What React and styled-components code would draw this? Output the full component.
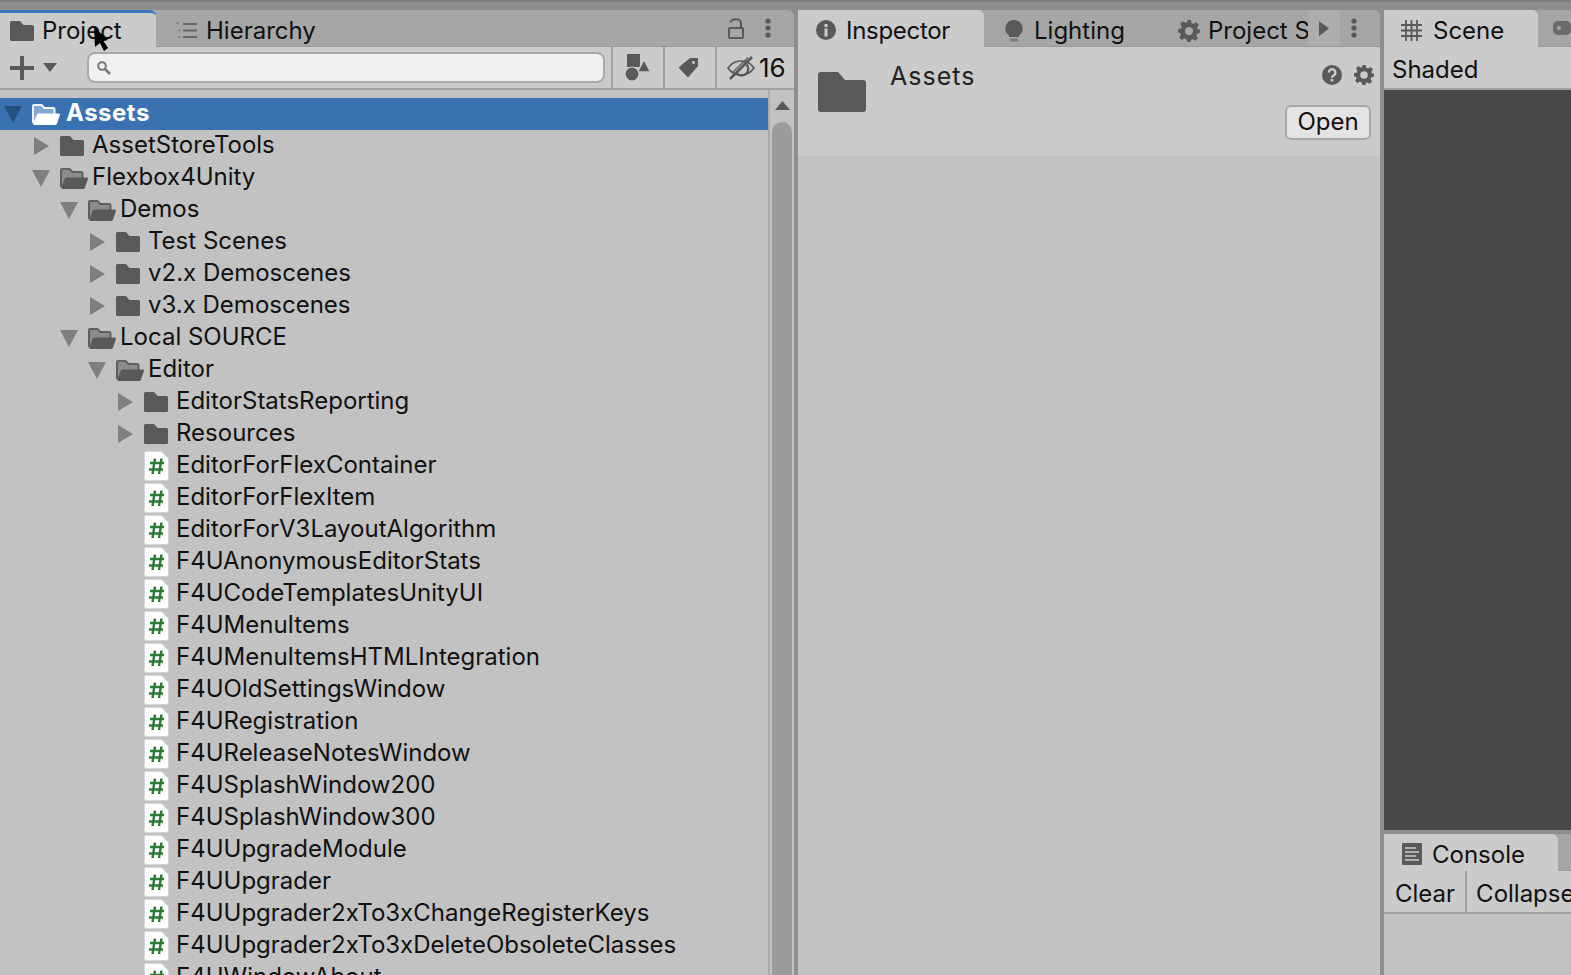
import styled, { createGlobalStyle } from "styled-components";

const GlobalStyle = createGlobalStyle`
html, body { margin: 0; padding: 0; height: 100%; overflow: hidden; background: #8e8e8e; }
* { box-sizing: border-box; }
`;

const Page = styled.div`
  position: relative;
  width: 1571px;
  height: 975px;
  overflow: hidden;
  display: flex;
  gap: 4px;
  padding-top: 10px;
  background: #8e8e8e;
  font-family: Inter, "Noto Sans", sans-serif;
  font-size: 24px;
  color: #111;
  &::before {
    content: "";
    position: absolute;
    left: 0;
    right: 0;
    top: 0;
    height: 2px;
    background: #7b7b7b;
  }
`;

const Panel = styled.div`
  width: ${(p) => p.$width}px;
  flex: none;
  display: flex;
  flex-direction: column;
  overflow: hidden;
`;

const TabBar = styled.div`
  height: 37px;
  flex: none;
  display: flex;
  align-items: stretch;
  background: #a6a6a6;
  border-radius: 6px 6px 0 0;
  border-bottom: 1px solid #9a9a9a;
`;

const Tab = styled.div`
  width: ${(p) => p.$width}px;
  flex: none;
  display: flex;
  align-items: center;
  gap: ${(p) => p.$gap || 10}px;
  padding-left: ${(p) => p.$pad}px;
  padding-top: ${(p) => (p.$focus ? 1 : p.$active ? 3 : 5)}px;
  overflow: hidden;
  white-space: nowrap;
  letter-spacing: ${(p) => p.$spacing || 0}px;
  background: ${(p) => (p.$active ? "#cbcbcb" : "transparent")};
  border-top: ${(p) => (p.$focus ? "3px solid #3d78c2" : "none")};
  border-radius: 0 6px 0 0;
  margin-bottom: ${(p) => (p.$active ? "-1px" : "0")};
  svg { flex: none; }
`;

const TabActions = styled.div`
  margin-left: auto;
  display: flex;
  align-items: center;
  gap: ${(p) => p.$gap || 0}px;
  padding-right: ${(p) => p.$pad || 0}px;
`;

const OverflowArrow = styled.div`
  width: 32px;
  flex: none;
  display: flex;
  align-items: center;
  justify-content: center;
  background: #adadad;
`;

const MenuBox = styled.div`
  width: 40px;
  flex: none;
  display: flex;
  align-items: center;
  padding-left: 11px;
`;

const Toolbar = styled.div`
  height: 43px;
  flex: none;
  display: flex;
  align-items: center;
  background: #cbcbcb;
  border-bottom: 2px solid #a0a0a0;
`;

const ToolbarPlus = styled.div`
  width: 87px;
  flex: none;
  display: flex;
  align-items: center;
  gap: 9px;
  padding-left: 10px;
`;

const SearchBox = styled.div`
  width: 518px;
  height: 31px;
  flex: none;
  display: flex;
  align-items: center;
  padding-left: 8px;
  background: #f0f0f0;
  border: 2px solid #a9a9a9;
  border-radius: 8px;
`;

const FilterButton = styled.div`
  width: ${(p) => p.$width}px;
  height: 41px;
  flex: none;
  display: flex;
  align-items: center;
  justify-content: ${(p) => (p.$start ? "flex-start" : "center")};
  gap: 4px;
  padding-left: ${(p) => (p.$start ? "10px" : "0")};
  padding-right: ${(p) => p.$nudge || 0}px;
  margin-left: ${(p) => p.$left || 0}px;
  border-left: 2px solid #a0a0a0;
`;

const CountLabel = styled.span`
  font-size: 26px;
`;

const TreeArea = styled.div`
  flex: 1;
  display: flex;
  min-height: 0;
  background: #c2c2c2;
`;

const Tree = styled.div`
  width: 768px;
  flex: none;
  padding-top: 8px;
  overflow: hidden;
`;

const Row = styled.div`
  height: 32px;
  display: flex;
  align-items: center;
  padding-left: ${(p) => 4 + p.$depth * 28}px;
  white-space: nowrap;
  background: ${(p) => (p.$selected ? "#3a72b1" : "transparent")};
  color: ${(p) => (p.$selected ? "#fff" : "#111")};
  font-weight: ${(p) => (p.$selected ? 700 : 400)};
  letter-spacing: ${(p) => (p.$selected ? "0.5px" : "0")};
`;

const RowLabel = styled.span`
  padding-bottom: 4px;
`;

const ArrowSlot = styled.div`
  width: 28px;
  height: 32px;
  flex: none;
  display: flex;
  align-items: center;
`;

const IconSlot = styled.div`
  width: ${(p) => (p.$wide ? 34 : 32)}px;
  height: 32px;
  flex: none;
  display: flex;
  align-items: center;
`;

const Scrollbar = styled.div`
  width: 26px;
  flex: none;
  display: flex;
  flex-direction: column;
  align-items: center;
  padding: 11px 0 0 0;
  border-left: 2px solid #a9a9a9;
`;

const ScrollThumb = styled.div`
  width: 20px;
  flex: 1;
  margin-top: 12px;
  background: #9b9b9b;
  border-radius: 10px 10px 0 0;
`;

const InspectorHeader = styled.div`
  height: 109px;
  flex: none;
  display: flex;
  background: #cbcbcb;
  padding: 25px 9px 0 20px;
`;

const InspectorTitle = styled.div`
  flex: 1;
  margin-left: 24px;
  margin-top: -12px;
  line-height: 32px;
  font-size: 25px;
  letter-spacing: 1px;
  color: #222;
`;

const InspectorSide = styled.div`
  display: flex;
  flex-direction: column;
  align-items: flex-end;
  margin-top: -7px;
  gap: 20px;
`;

const HeaderIcons = styled.div`
  display: flex;
  align-items: center;
  gap: 12px;
  margin-right: -3px;
`;

const OpenButton = styled.div`
  width: 86px;
  height: 35px;
  display: flex;
  align-items: center;
  justify-content: center;
  padding-bottom: 2px;
  background: #e4e4e4;
  border: 2px solid #a9a9a9;
  border-radius: 6px;
`;

const Fill = styled.div`
  flex: 1;
  background: #c2c2c2;
`;

const SceneView = styled.div`
  height: 744px;
  flex: none;
  background: #484848;
  border-bottom: 4px solid #8e8e8e;
`;

const SceneTabBar = styled(TabBar)`
  border-radius: 0;
`;

const PlainLabel = styled.div`
  padding: 3px 0 0 ${(p) => p.$pad}px;
  white-space: nowrap;
`;

const ConsoleButton = styled.div`
  height: 41px;
  flex: none;
  display: flex;
  align-items: center;
  white-space: nowrap;
  padding: 3px ${(p) => p.$right}px 0 ${(p) => p.$left}px;
  border-right: ${(p) => (p.$divider ? "2px solid #a0a0a0" : "none")};
`;

const Cursor = styled.svg`
  position: absolute;
  left: 94px;
  top: 27px;
`;

const ink = "#595959";

const FolderClosed = ({ w = 24, h = 20 }) => (
  <svg width={w} height={h} viewBox="0 0 24 20">
    <path d="M1.500 0H10l3.500 4H22.500a1.500 1.500 0 0 1 1.500 1.500V18.500A1.500 1.500 0 0 1 22.500 20H1.500A1.500 1.500 0 0 1 0 18.500V1.500A1.500 1.500 0 0 1 1.500 0Z" fill={ink} />
  </svg>
);

const FolderOpen = ({ light }) => (
  <svg width="28" height="21" viewBox="0 0 28 21">
    <path
      d="M2 1H9.500l3 3H21a1.500 1.500 0 0 1 1.500 1.500V12H6L2.500 19A1.500 1.500 0 0 1 1 17.500V2A1 1 0 0 1 2 1Z"
      fill={light ? "#7fa8d6" : "#8c8c8c"}
      stroke={light ? "#f2f6fb" : "#606060"}
      strokeWidth="2"
    />
    <path d="M6.500 9.500H26.500a1.400 1.400 0 0 1 1.300 1.900L25 19.500A2 2 0 0 1 23 21H2.500a1 1 0 0 1-1-1.300L4.600 11A2 2 0 0 1 6.500 9.500Z" fill={light ? "#fff" : ink} />
  </svg>
);

const ArrowRight = () => (
  <svg width="20" height="18" viewBox="0 0 20 18"><path d="M2 0L17 9L2 18Z" fill="#7f7f7f" /></svg>
);

const ArrowDown = ({ color = "#7f7f7f" }) => (
  <svg width="20" height="18" viewBox="0 0 20 18"><path d="M0 1H18L9 18Z" fill={color} /></svg>
);

const ScriptIcon = () => (
  <svg width="25" height="30" viewBox="0 0 25 30">
    <path d="M2.500.5H17.500L24.500 7.500V27.500A2 2 0 0 1 22.500 29.500H2.500A2 2 0 0 1 .5 27.500V2.500A2 2 0 0 1 2.500.5Z" fill="#fff" stroke="#d6d6d6" />
    <path d="M11 7.500L8.500 23M17.500 7.500L15 23M6 12H20M5 18.500H19" stroke="#2a7b30" strokeWidth="2.400" fill="none" />
  </svg>
);

const Dots = () => (
  <svg width="6" height="20" viewBox="0 0 6 20" fill={ink}>
    <circle cx="3" cy="3" r="2.600" /><circle cx="3" cy="10" r="2.600" /><circle cx="3" cy="17" r="2.600" />
  </svg>
);

const Gear = ({ size = 22 }) => (
  <svg width={size} height={size} viewBox="0 0 24 24">
    <path fillRule="evenodd" fill={ink} d="M10 0h4l.7 3.300 2.300 1 2.900-1.800 2.800 2.800-1.800 2.900 1 2.300L24 10v4l-3.100.7-1 2.300 1.800 2.900-2.800 2.800-2.900-1.800-2.300 1L14 24h-4l-.7-3.100-2.300-1-2.900 1.800-2.800-2.800 1.800-2.900-1-2.300L0 14v-4l3.100-.7 1-2.300-1.800-2.900 2.800-2.800 2.900 1.800 2.300-1ZM12 7.500a4.500 4.500 0 1 0 0 9 4.500 4.500 0 0 0 0-9Z" />
  </svg>
);

const Lock = () => (
  <svg width="16" height="21" viewBox="0 0 16 21" fill="none" stroke={ink} strokeWidth="2">
    <rect x="1" y="10" width="14" height="10" rx="1" />
    <path d="M2.500 4.500C4 0 13 0 13 5.500V10" />
  </svg>
);

const ListIcon = () => (
  <svg width="21" height="17" viewBox="0 0 21 17" stroke="#666" strokeWidth="2" fill="none">
    <path d="M7 2H21M7 8.500H21M7 15H21" />
    <path d="M0 1H3M2 8.500H5M2 15H5" stroke="#888" />
  </svg>
);

const InfoIcon = () => (
  <svg width="20" height="20" viewBox="0 0 20 20">
    <circle cx="10" cy="10" r="10" fill={ink} />
    <rect x="8.500" y="4" width="3" height="3" fill="#cbcbcb" />
    <rect x="8.500" y="8.500" width="3" height="8" fill="#cbcbcb" />
  </svg>
);

const Bulb = () => (
  <svg width="18" height="22" viewBox="0 0 18 22" fill={ink}>
    <path d="M9 0a8.500 8.500 0 0 1 5 15.400V17H4v-1.600A8.500 8.500 0 0 1 9 0Z" />
    <rect x="5" y="18.500" width="8" height="3" rx="1" fill="#7a7a7a" />
  </svg>
);

const GridIcon = () => (
  <svg width="21" height="21" viewBox="0 0 21 21" stroke={ink} strokeWidth="1.800" fill="none">
    <path d="M5 0V21M10.500 0V21M16 0V21M0 5H21M0 10.500H21M0 16H21" />
  </svg>
);

const QuestionIcon = () => (
  <svg width="20" height="20" viewBox="0 0 20 20">
    <circle cx="10" cy="10" r="10" fill={ink} />
    <path d="M6.800 7.500a3.300 3.300 0 1 1 5 2.800c-1.200.8-1.800 1.200-1.800 2.400" stroke="#cbcbcb" strokeWidth="2.400" fill="none" />
    <rect x="8.700" y="14" width="2.600" height="2.600" fill="#cbcbcb" />
  </svg>
);

const ConsoleIcon = () => (
  <svg width="20" height="22" viewBox="0 0 20 22">
    <rect width="20" height="22" rx="1" fill={ink} />
    <path d="M3 5H14M3 9H17M3 13H14M3 17H17" stroke="#cbcbcb" strokeWidth="1.700" />
  </svg>
);

const SearchIcon = () => (
  <svg width="14" height="14" viewBox="0 0 14 14" fill="none" stroke="#777" strokeWidth="2">
    <circle cx="5" cy="5" r="3.800" /><path d="M8 8L13 13" strokeWidth="2.500" />
  </svg>
);

const ShapesIcon = () => (
  <svg width="25" height="27" viewBox="0 0 25 27" fill={ink}>
    <rect x="2" y="0" width="13" height="13" />
    <path d="M19 5.500L25.500 18H12.500Z" stroke="#cbcbcb" strokeWidth="1.500" />
    <circle cx="7" cy="20" r="7" stroke="#cbcbcb" strokeWidth="1.200" />
  </svg>
);

const TagIcon = () => (
  <svg width="21" height="21" viewBox="0 0 21 21">
    <path fillRule="evenodd" fill={ink} d="M12 1H20V9L10 20.500L0.500 10.500ZM15.500 4a1.500 1.500 0 1 0 0 3 1.500 1.500 0 0 0 0-3Z" />
  </svg>
);

const EyeOff = () => (
  <svg width="28" height="24" viewBox="0 0 28 24" fill="none" stroke={ink} strokeWidth="1.600">
    <path d="M1 12C5 6 10 5 14 5s9 1 13 7c-4 6-9 7-13 7S5 18 1 12Z" />
    <path d="M10 17.500A6.500 6.500 0 0 0 19.500 8.500" strokeWidth="2.400" />
    <path d="M25 1L3 23" strokeWidth="2.600" />
    <path d="M21 1.500L6 16" strokeWidth="1.200" />
  </svg>
);

const PuzzleIcon = () => (
  <svg width="18" height="14" viewBox="0 0 18 14">
    <rect width="18" height="14" rx="5" fill="#6b6b6b" />
    <circle cx="6" cy="7" r="2" fill="#a6a6a6" />
  </svg>
);

const treeRows = [
  { name: "Assets", depth: 0, kind: "open", selected: true },
  { name: "AssetStoreTools", depth: 1, kind: "closed" },
  { name: "Flexbox4Unity", depth: 1, kind: "open" },
  { name: "Demos", depth: 2, kind: "open" },
  { name: "Test Scenes", depth: 3, kind: "closed" },
  { name: "v2.x Demoscenes", depth: 3, kind: "closed" },
  { name: "v3.x Demoscenes", depth: 3, kind: "closed" },
  { name: "Local SOURCE", depth: 2, kind: "open" },
  { name: "Editor", depth: 3, kind: "open" },
  { name: "EditorStatsReporting", depth: 4, kind: "closed" },
  { name: "Resources", depth: 4, kind: "closed" },
  ...[
    "EditorForFlexContainer",
    "EditorForFlexItem",
    "EditorForV3LayoutAlgorithm",
    "F4UAnonymousEditorStats",
    "F4UCodeTemplatesUnityUI",
    "F4UMenuItems",
    "F4UMenuItemsHTMLIntegration",
    "F4UOldSettingsWindow",
    "F4URegistration",
    "F4UReleaseNotesWindow",
    "F4USplashWindow200",
    "F4USplashWindow300",
    "F4UUpgradeModule",
    "F4UUpgrader",
    "F4UUpgrader2xTo3xChangeRegisterKeys",
    "F4UUpgrader2xTo3xDeleteObsoleteClasses",
    "F4UWindowAbout",
  ].map((name) => ({ name, depth: 4, kind: "script" })),
];

const TreeRow = ({ name, depth, kind, selected }) => (
  <Row $depth={depth} $selected={selected}>
    <ArrowSlot>
      {kind === "open" && <ArrowDown color={selected ? "#24507f" : "#7f7f7f"} />}
      {kind === "closed" && <ArrowRight />}
    </ArrowSlot>
    <IconSlot $wide={selected}>
      {kind === "open" && <FolderOpen light={selected} />}
      {kind === "closed" && <FolderClosed />}
      {kind === "script" && <ScriptIcon />}
    </IconSlot>
    <RowLabel>{name}</RowLabel>
  </Row>
);

export default function App() {
  return (
    <Page>
      <GlobalStyle />
      <Panel $width={794}>
        <TabBar>
          <Tab $width={156} $active $focus $pad={10} $gap={8}>
            <FolderClosed />
            Project
          </Tab>
          <Tab $width={180} $pad={20} $gap={9}>
            <ListIcon />
            Hierarchy
          </Tab>
          <TabActions $gap={21} $pad={23}>
            <Lock />
            <Dots />
          </TabActions>
        </TabBar>
        <Toolbar>
          <ToolbarPlus>
            <svg width="24" height="24" viewBox="0 0 24 24" fill={ink}>
              <path d="M10 0h4v10h10v4H14v10h-4V14H0v-4h10Z" />
            </svg>
            <svg width="14" height="9" viewBox="0 0 14 9" fill={ink}>
              <path d="M0 0H14L7 9Z" />
            </svg>
          </ToolbarPlus>
          <SearchBox>
            <SearchIcon />
          </SearchBox>
          <FilterButton $width={52} $left={6} $nudge={2}>
            <ShapesIcon />
          </FilterButton>
          <FilterButton $width={52} $nudge={4}>
            <TagIcon />
          </FilterButton>
          <FilterButton $width={79} $start>
            <EyeOff />
            <CountLabel>16</CountLabel>
          </FilterButton>
        </Toolbar>
        <TreeArea>
          <Tree>
            {treeRows.map((row) => (
              <TreeRow key={row.name} {...row} />
            ))}
          </Tree>
          <Scrollbar>
            <svg width="15" height="9" viewBox="0 0 15 9" fill={ink}>
              <path d="M7.500 0L15 9H0Z" />
            </svg>
            <ScrollThumb />
          </Scrollbar>
        </TreeArea>
      </Panel>

      <Panel $width={582}>
        <TabBar>
          <Tab $width={186} $active $pad={18} $spacing={-0.3}>
            <InfoIcon />
            Inspector
          </Tab>
          <Tab $width={172} $pad={21} $gap={11}>
            <Bulb />
            Lighting
          </Tab>
          <Tab $width={152} $pad={22} $gap={8}>
            <Gear />
            Project Settings
          </Tab>
          <OverflowArrow>
            <svg width="10" height="15" viewBox="0 0 10 15" fill={ink}>
              <path d="M0 0L10 7.500L0 15Z" />
            </svg>
          </OverflowArrow>
          <MenuBox>
            <Dots />
          </MenuBox>
        </TabBar>
        <InspectorHeader>
          <FolderClosed w={48} h={40} />
          <InspectorTitle>Assets</InspectorTitle>
          <InspectorSide>
            <HeaderIcons>
              <QuestionIcon />
              <Gear size={20} />
            </HeaderIcons>
            <OpenButton>Open</OpenButton>
          </InspectorSide>
        </InspectorHeader>
        <Fill />
      </Panel>

      <Panel $width={187}>
        <SceneTabBar>
          <Tab $width={154} $active $pad={17} $gap={11}>
            <GridIcon />
            Scene
          </Tab>
          <TabActions $pad={0}>
            <PuzzleIcon />
          </TabActions>
        </SceneTabBar>
        <Toolbar>
          <PlainLabel $pad={8}>Shaded</PlainLabel>
        </Toolbar>
        <SceneView />
        <SceneTabBar>
          <Tab $width={174} $active $pad={18} $gap={10}>
            <ConsoleIcon />
            Console
          </Tab>
        </SceneTabBar>
        <Toolbar>
          <ConsoleButton $left={11} $right={10} $divider>Clear</ConsoleButton>
          <ConsoleButton $left={9} $right={0}>Collapse</ConsoleButton>
        </Toolbar>
        <Fill />
      </Panel>

      <Cursor width="17" height="24" viewBox="0 0 17 24" fill="#000">
        <path d="M0 0L14 13L9.500 14L14 21L10 24L6 16L1 20Z" />
      </Cursor>
    </Page>
  );
}
